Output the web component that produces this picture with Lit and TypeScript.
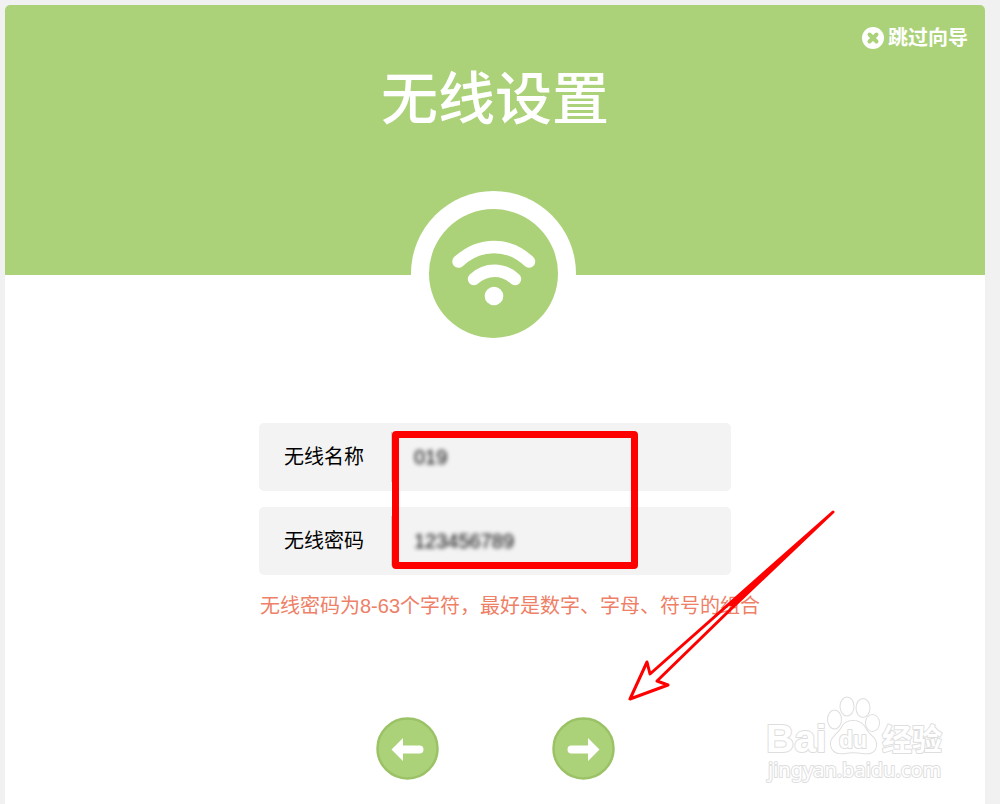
import { LitElement, html, css } from "lit";
import { customElement, state } from "lit/decorators.js";

@customElement("app-root")
export class AppRoot extends LitElement {
  static styles = css`
    :host {
      display: block;
      box-sizing: border-box;
      min-height: 100vh;
      padding: 5px 15px 0 5px;
      background: #f1f1f1;
      color: #000;
      font-family: "Liberation Sans", "Noto Sans CJK SC", sans-serif;
      font-size: 20px;
      line-height: 30px;
    }
    .card {
      position: relative;
      box-sizing: border-box;
      display: flex;
      flex-direction: column;
      min-height: calc(100vh - 5px);
      background: #fff;
      border-radius: 5px 5px 0 0;
      overflow: hidden;
    }
    .banner {
      display: flex;
      flex-direction: column;
      align-items: center;
      height: 270px;
      background: #abd278;
      color: #fff;
    }
    .skip {
      align-self: flex-end;
      display: flex;
      align-items: center;
      gap: 4px;
      margin: 18px 17px 0 0;
      color: inherit;
      font-weight: 700;
      text-decoration: none;
    }
    h1 {
      margin: 5px 0 0;
      font-family: "Noto Sans CJK SC", sans-serif;
      font-size: 57px;
      font-weight: 500;
      line-height: 72px;
    }
    .badge {
      align-self: center;
      margin-top: -85px;
      z-index: 1;
    }
    svg {
      display: block;
    }
    form {
      position: relative;
      align-self: center;
      display: flex;
      flex-direction: column;
      gap: 16px;
      width: 472px;
      margin-top: 65px;
    }
    .row {
      display: flex;
      align-items: center;
      height: 68px;
      border-radius: 5px;
      background: #f3f3f3;
    }
    label {
      flex: none;
      width: 107px;
      padding-left: 25px;
    }
    .cell {
      flex: 1;
      display: flex;
      align-items: center;
      height: 50px;
      border-left: 1px solid #ccc;
    }
    input {
      flex: 1;
      min-width: 0;
      height: 30px;
      padding: 0 22px;
      border: 0;
      outline: 0;
      background: transparent;
      color: #000;
      font: inherit;
      filter: blur(2px);
    }
    .hint {
      margin: 0 0 0 1px;
      color: #ee8067;
      white-space: nowrap;
    }
    .nav {
      display: flex;
      gap: 113px;
      margin-top: 96px;
      justify-content: center;
      padding: 0 0 22px 1px;
    }
    .nav button {
      padding: 0;
      border: 0;
      background: none;
      border-radius: 50%;
      cursor: pointer;
    }
    .frame {
      position: absolute;
      box-sizing: border-box;
      left: 133px;
      top: 8px;
      width: 246px;
      height: 138px;
      border: 7px solid #f00;
      border-radius: 4px;
      pointer-events: none;
    }
    .pointer {
      position: absolute;
      left: 361px;
      top: 77px;
      pointer-events: none;
    }
    .mark {
      position: absolute;
      right: 35px;
      bottom: 14px;
      pointer-events: none;
    }
    .brand {
      font-family: "Liberation Sans", sans-serif;
      font-weight: 700;
    }
    .cjk {
      font-family: "Noto Sans CJK SC", sans-serif;
      font-weight: 700;
    }
    .site {
      font-family: "Noto Sans", sans-serif;
    }
  `;

  @state() private ssid = "019";
  @state() private password = "123456789";

  render() {
    return html`
      <main class="card">
        <header class="banner">
          <a class="skip" href="#skip">
            <svg width="22" height="22" viewBox="0 0 22 22" aria-hidden="true">
              <circle cx="11" cy="11" r="11" fill="#fff" />
              <path d="M7.500 7.500l7 7M14.500 7.500l-7 7" stroke="#abd278" stroke-width="4" stroke-linecap="round" />
            </svg>
            <span>跳过向导</span>
          </a>
          <h1>无线设置</h1>
        </header>
        <svg class="badge" width="168" height="168" viewBox="0 0 168 168" aria-hidden="true">
          <circle cx="82.500" cy="83.500" r="82.500" fill="#fff" />
          <circle cx="82.500" cy="83.500" r="64.500" fill="#abd278" />
          <g fill="none" stroke="#fff" stroke-linecap="round">
            <path d="M47.500 71.500C69 52 97 52 118 71.500" stroke-width="12.500" />
            <path d="M63 89C75 78 92 78 104 89" stroke-width="12.500" />
          </g>
          <circle cx="83" cy="106" r="9.300" fill="#fff" />
        </svg>
        <form @submit=${(e: Event) => e.preventDefault()}>
          <div class="row">
            <label for="ssid">无线名称</label>
            <div class="cell">
              <input
                id="ssid"
                .value=${this.ssid}
                @input=${(e: Event) => (this.ssid = (e.target as HTMLInputElement).value)}
              />
            </div>
          </div>
          <div class="row">
            <label for="password">无线密码</label>
            <div class="cell">
              <input
                id="password"
                .value=${this.password}
                @input=${(e: Event) => (this.password = (e.target as HTMLInputElement).value)}
              />
            </div>
          </div>
          <p class="hint">无线密码为8-63个字符，最好是数字、字母、符号的组合</p>
          <div class="frame"></div>
          <svg class="pointer" width="220" height="206" viewBox="0 0 220 206" aria-hidden="true">
            <path
              d="M213 12L30 174L27 162L10 199L48 185L37 181L113 107Z"
              fill="none"
              stroke="#f00"
              stroke-width="3"
              stroke-linejoin="round"
            />
            <path d="M213 12L108 105L113 107Z" fill="#f00" />
          </svg>
        </form>
        <nav class="nav">
          <button type="button" aria-label="上一步">
            <svg width="63" height="63" viewBox="0 0 63 63">
              <circle cx="31.500" cy="31.500" r="30" fill="#abd278" stroke="#9bc266" stroke-width="2.500" />
              <path d="M15.500 32.500L27 21V28.500H43.500A4 4 0 0 1 43.500 36.500H27V44Z" fill="#fff" />
            </svg>
          </button>
          <button type="button" aria-label="下一步">
            <svg width="63" height="63" viewBox="0 0 63 63">
              <circle cx="31.500" cy="31.500" r="30" fill="#abd278" stroke="#9bc266" stroke-width="2.500" />
              <path d="M47.500 32.500L36 21V28.500H19.500A4 4 0 0 0 19.500 36.500H36V44Z" fill="#fff" />
            </svg>
          </button>
        </nav>
        <svg class="mark" width="190" height="100" viewBox="0 0 190 100">
          <g fill="#fff" stroke="#dedede" stroke-width="2" stroke-linejoin="round" paint-order="stroke">
            <text class="brand" x="6" y="62" font-size="39">Bai</text>
            <ellipse cx="74.500" cy="29.500" rx="6.500" ry="9" />
            <ellipse cx="87" cy="16.500" rx="6.500" ry="9" />
            <ellipse cx="103" cy="18" rx="6.500" ry="9" />
            <ellipse cx="112.500" cy="33" rx="6.500" ry="8" />
            <path d="M93 31C99 31 103 33 107 41C111 47 117 48 116 56C115 63 109 64 102 63C96 62 91 62 85 63C78 64 72 62 71 55C70 48 77 45 81 39C84 33 87 31 93 31Z" />
            <text class="brand" x="79" y="58" font-size="23">du</text>
            <text class="cjk" x="122" y="60" font-size="30">经验</text>
            <text class="site" x="8" y="87" font-size="20">jingyan.baidu.com</text>
          </g>
        </svg>
      </main>
    `;
  }
}
